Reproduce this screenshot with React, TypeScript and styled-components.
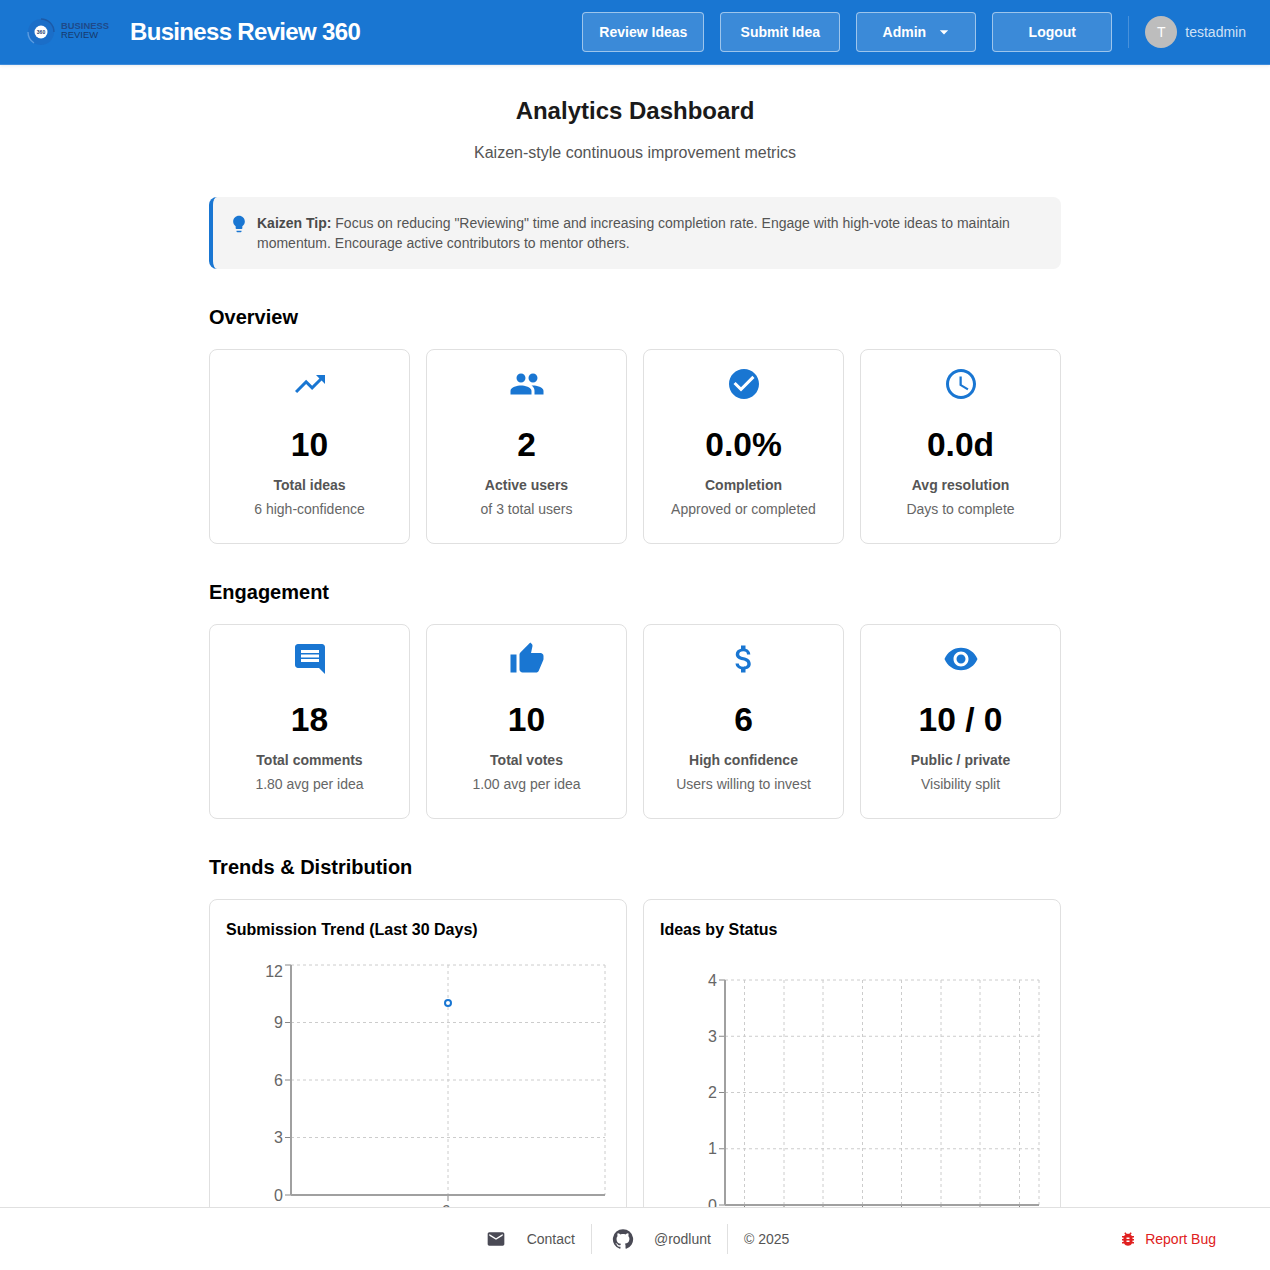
import { ReactNode } from "react";
import styled, { createGlobalStyle } from "styled-components";
import {
  MdArrowDropDown,
  MdAttachMoney,
  MdBugReport,
  MdCheckCircle,
  MdComment,
  MdEmail,
  MdLightbulb,
  MdOutlineAccessTime,
  MdPeople,
  MdThumbUp,
  MdTrendingUp,
  MdVisibility,
} from "react-icons/md";

const GlobalStyle = createGlobalStyle`
  html, body {
    margin: 0;
    height: 100%;
    overflow: hidden;
    background: #fff;
    font-family: "Liberation Sans", Arial, sans-serif;
  }
  * { box-sizing: border-box; }
`;

const Header = styled.header`
  height: 65px;
  padding: 0 24px;
  display: flex;
  align-items: center;
  background: #1976d2;
  border-bottom: 1px solid #3d8bdb;
  box-shadow: 0 1px 3px rgba(0, 0, 0, 0.08);
`;

const Brand = styled.div`
  display: flex;
  align-items: center;
  flex: 1;
`;

const BrandName = styled.div`
  margin-left: 20px;
  font-size: 24px;
  font-weight: 700;
  letter-spacing: -0.67px;
  color: #fff;
`;

const Nav = styled.nav`
  display: flex;
  align-items: center;
  gap: 16px;
`;

const NavButton = styled.button`
  min-width: 120px;
  height: 40px;
  padding: 0 16px;
  display: flex;
  align-items: center;
  justify-content: center;
  border: 1px solid rgba(255, 255, 255, 0.5);
  border-radius: 4px;
  background: rgba(255, 255, 255, 0.15);
  color: #fff;
  font: 700 14px "Liberation Sans", Arial, sans-serif;

  svg {
    margin: 0 -4px 0 8px;
  }
`;

const UserBox = styled.div`
  margin-left: 16px;
  padding-left: 16px;
  height: 32px;
  display: flex;
  align-items: center;
  gap: 8px;
  border-left: 1px solid rgba(255, 255, 255, 0.2);
`;

const Avatar = styled.div`
  width: 32px;
  height: 32px;
  border-radius: 50%;
  background: #bdbdbd;
  color: #fff;
  font-size: 14px;
  display: flex;
  align-items: center;
  justify-content: center;
`;

const UserName = styled.span`
  font-size: 14px;
  color: rgba(255, 255, 255, 0.8);
`;

const Main = styled.main`
  width: 852px;
  margin: 0 auto;
`;

const PageTitle = styled.h1`
  margin: 30px 0 0;
  font-size: 24px;
  line-height: 32px;
  font-weight: 700;
  text-align: center;
  color: #1a1a1a;
`;

const PageSubtitle = styled.p`
  margin: 14px 0 0;
  font-size: 16px;
  line-height: 24px;
  text-align: center;
  color: #555;
`;

const TipBox = styled.div`
  margin-top: 32px;
  padding: 16px;
  display: flex;
  gap: 8px;
  background: #f4f4f4;
  border-left: 4px solid #1976d2;
  border-radius: 8px;
  font-size: 14px;
  line-height: 20px;
  color: #555;

  svg {
    flex: none;
    margin-top: 1px;
    color: #1976d2;
  }

  strong {
    color: #4a4a4a;
  }
`;

const SectionTitle = styled.h2`
  margin: 34px 0 18px;
  font-size: 20px;
  line-height: 28px;
  font-weight: 700;
  color: #000;
`;

const StatGrid = styled.div`
  display: grid;
  grid-template-columns: repeat(4, 1fr);
  gap: 16px;
`;

const StatCard = styled.div`
  padding: 16px 8px 24px;
  display: flex;
  flex-direction: column;
  align-items: center;
  border: 1px solid #e0e0e0;
  border-radius: 8px;
  background: #fff;
  text-align: center;

  > svg {
    color: #1976d2;
  }
`;

const StatValue = styled.div`
  margin-top: 23px;
  font-size: 33.6px;
  line-height: 40px;
  font-weight: 700;
  color: #000;
`;

const StatLabel = styled.div`
  margin-top: 10px;
  font-size: 14px;
  line-height: 20px;
  font-weight: 700;
  color: #555;
`;

const StatNote = styled.div`
  margin-top: 4px;
  font-size: 14px;
  line-height: 20px;
  color: #666;
`;

const ChartGrid = styled.div`
  display: grid;
  grid-template-columns: repeat(2, 1fr);
  gap: 16px;
`;

const ChartCard = styled.div`
  padding: 18px 16px 24px;
  border: 1px solid #e0e0e0;
  border-radius: 8px;
  background: #fff;
`;

const ChartTitle = styled.h3`
  margin: 0 0 15px;
  font-size: 16px;
  line-height: 24px;
  font-weight: 700;
  color: #000;
`;

const ChartSvg = styled.svg`
  display: block;

  text {
    font: 16px "Liberation Sans", Arial, sans-serif;
    fill: #666;
  }
`;

const Footer = styled.footer`
  position: fixed;
  left: 0;
  right: 0;
  bottom: 0;
  height: 63px;
  padding: 0 54px;
  display: grid;
  grid-template-columns: 1fr auto 1fr;
  align-items: center;
  background: #fff;
  border-top: 1px solid #e0e0e0;
  font-size: 14px;
  color: #555;
`;

const FooterLinks = styled.div`
  grid-column: 2;
  margin-left: 4px;
  display: flex;
  align-items: center;
`;

const FooterItem = styled.div<{ $gap: number; $inset: number }>`
  height: 30px;
  display: flex;
  align-items: center;
  gap: ${(p) => p.$gap}px;
  padding: 0 16px 0 ${(p) => p.$inset}px;
  border-right: 1px solid #e0e0e0;

  svg {
    color: #4a4a55;
    flex: none;
  }

  &:last-child {
    padding-right: 0;
    border-right: 0;
  }
`;

const BugLink = styled.div`
  justify-self: end;
  display: flex;
  align-items: center;
  gap: 8px;
  color: #e02020;

  svg {
    flex: none;
  }
`;

interface Stat {
  icon: ReactNode;
  value: string;
  label: string;
  note: string;
}

const overview: Stat[] = [
  { icon: <MdTrendingUp size={36} />, value: "10", label: "Total ideas", note: "6 high-confidence" },
  { icon: <MdPeople size={36} />, value: "2", label: "Active users", note: "of 3 total users" },
  { icon: <MdCheckCircle size={36} />, value: "0.0%", label: "Completion", note: "Approved or completed" },
  { icon: <MdOutlineAccessTime size={36} />, value: "0.0d", label: "Avg resolution", note: "Days to complete" },
];

const engagement: Stat[] = [
  { icon: <MdComment size={36} />, value: "18", label: "Total comments", note: "1.80 avg per idea" },
  { icon: <MdThumbUp size={36} />, value: "10", label: "Total votes", note: "1.00 avg per idea" },
  { icon: <MdAttachMoney size={36} />, value: "6", label: "High confidence", note: "Users willing to invest" },
  { icon: <MdVisibility size={36} />, value: "10 / 0", label: "Public / private", note: "Visibility split" },
];

interface Tick {
  label: string;
  y: number;
  labelY?: number;
}

interface PlotProps {
  left: number;
  right: number;
  top: number;
  bottom: number;
  yTicks: Tick[];
  xGrid: number[];
  xTicks: number[];
  xLabels?: { x: number; label: string }[];
  dot?: { x: number; y: number };
}

const Plot = ({ left, right, top, bottom, yTicks, xGrid, xTicks, xLabels, dot }: PlotProps) => (
  <ChartSvg width={384} height={300} viewBox="0 0 384 300">
    <g stroke="#ccc" strokeDasharray="3 3" fill="none">
      {yTicks.map((t) => (
        <line key={t.y} x1={left} x2={right} y1={t.y} y2={t.y} />
      ))}
      {xGrid.map((x) => (
        <line key={x} x1={x} x2={x} y1={top} y2={bottom} />
      ))}
    </g>
    <g stroke="#888" fill="none">
      {yTicks.map((t) => (
        <line key={t.y} x1={left - 6} x2={left} y1={t.y} y2={t.y} />
      ))}
      {xTicks.map((x) => (
        <line key={x} x1={x} x2={x} y1={bottom} y2={bottom + 6} />
      ))}
    </g>
    <g stroke="#a0a0a0" strokeWidth={2} fill="none">
      <line x1={left} x2={left} y1={top} y2={bottom} />
      <line x1={left} x2={right} y1={bottom} y2={bottom} />
    </g>
    {yTicks.map((t) => (
      <text key={t.y} x={left - 8} y={(t.labelY ?? t.y) + 5.7} textAnchor="end">
        {t.label}
      </text>
    ))}
    {xLabels?.map((l) => (
      <text key={l.x} x={l.x} y={bottom + 22} textAnchor="middle">
        {l.label}
      </text>
    ))}
    {dot && <circle cx={dot.x} cy={dot.y} r={3} fill="#fff" stroke="#1976d2" strokeWidth={2} />}
  </ChartSvg>
);

const StatCards = ({ stats }: { stats: Stat[] }) => (
  <StatGrid>
    {stats.map((s) => (
      <StatCard key={s.label}>
        {s.icon}
        <StatValue>{s.value}</StatValue>
        <StatLabel>{s.label}</StatLabel>
        <StatNote>{s.note}</StatNote>
      </StatCard>
    ))}
  </StatGrid>
);

const Logo = () => (
  <svg width="86" height="40" viewBox="0 0 86 40">
    <circle cx="17" cy="20" r="13" fill="#1b6ec8" />
    <path d="M17 7a13 13 0 0 1 13 13" fill="none" stroke="#1c5aa8" strokeWidth="1.4" />
    <path d="M4 20a13 13 0 0 0 6 11" fill="none" stroke="#5a9be0" strokeWidth="1.4" />
    <circle cx="17" cy="20" r="6.5" fill="#fff" />
    <text x="17" y="22" textAnchor="middle" fontSize="5" fontWeight="700" fill="#1a3a6b" fontFamily="Liberation Sans">
      360
    </text>
    <text x="37" y="17" fontSize="9.4" fontWeight="700" fill="#1f4a8a" fontFamily="Liberation Sans">
      BUSINESS
    </text>
    <text x="37" y="26" fontSize="9.4" fill="#17396b" fontFamily="Liberation Sans">
      REVIEW
    </text>
  </svg>
);

const GithubIcon = () => (
  <svg width="22" height="22" viewBox="0 0 24 24" fill="currentColor">
    <path d="M12 1.27a11 11 0 0 0-3.48 21.46c.55.09.73-.28.73-.55v-1.84c-3.03.64-3.67-1.46-3.67-1.46-.55-1.29-1.28-1.65-1.28-1.65-.92-.65.1-.65.1-.65 1.1 0 1.73 1.1 1.73 1.1.92 1.65 2.57 1.2 3.21.92a2 2 0 0 1 .64-1.47c-2.47-.27-5.04-1.19-5.04-5.5 0-1.1.46-2.1 1.2-2.84a3.76 3.76 0 0 1 0-2.93s.91-.28 3.11 1.1c1.8-.49 3.7-.49 5.5 0 2.1-1.38 3.02-1.1 3.02-1.1a3.76 3.76 0 0 1 0 2.93c.83.74 1.2 1.74 1.2 2.94 0 4.21-2.57 5.13-5.04 5.4.45.37.82.92.82 2.02v3.03c0 .27.1.64.73.55A11 11 0 0 0 12 1.27" />
  </svg>
);

const App = () => (
  <>
    <GlobalStyle />
    <Header>
      <Brand>
        <Logo />
        <BrandName>Business Review 360</BrandName>
      </Brand>
      <Nav>
        <NavButton>Review Ideas</NavButton>
        <NavButton>Submit Idea</NavButton>
        <NavButton>
          Admin
          <MdArrowDropDown size={20} />
        </NavButton>
        <NavButton>Logout</NavButton>
      </Nav>
      <UserBox>
        <Avatar>T</Avatar>
        <UserName>testadmin</UserName>
      </UserBox>
    </Header>

    <Main>
      <PageTitle>Analytics Dashboard</PageTitle>
      <PageSubtitle>Kaizen-style continuous improvement metrics</PageSubtitle>

      <TipBox>
        <MdLightbulb size={20} />
        <div>
          <strong>Kaizen Tip:</strong> Focus on reducing "Reviewing" time and increasing completion rate. Engage with
          high-vote ideas to maintain momentum. Encourage active contributors to mentor others.
        </div>
      </TipBox>

      <SectionTitle>Overview</SectionTitle>
      <StatCards stats={overview} />

      <SectionTitle>Engagement</SectionTitle>
      <StatCards stats={engagement} />

      <SectionTitle>Trends &amp; Distribution</SectionTitle>
      <ChartGrid>
        <ChartCard>
          <ChartTitle>Submission Trend (Last 30 Days)</ChartTitle>
          <Plot
            left={65}
            right={379}
            top={8}
            bottom={238}
            yTicks={[
              { label: "12", y: 8, labelY: 14 },
              { label: "9", y: 65.5 },
              { label: "6", y: 123 },
              { label: "3", y: 180.5 },
              { label: "0", y: 238 },
            ]}
            xGrid={[222, 379]}
            xTicks={[222]}
            xLabels={[{ x: 220, label: "6" }]}
            dot={{ x: 222, y: 46 }}
          />
        </ChartCard>
        <ChartCard>
          <ChartTitle>Ideas by Status</ChartTitle>
          <Plot
            left={65}
            right={379}
            top={23}
            bottom={248}
            yTicks={[
              { label: "4", y: 23 },
              { label: "3", y: 79.25 },
              { label: "2", y: 135.5 },
              { label: "1", y: 191.75 },
              { label: "0", y: 248 },
            ]}
            xGrid={[84.5, 124, 163, 202.5, 241.5, 281, 320, 359.5, 379]}
            xTicks={[84.5, 124, 163, 202.5, 241.5, 281, 320, 359.5]}
          />
        </ChartCard>
      </ChartGrid>
    </Main>

    <Footer>
      <FooterLinks>
        <FooterItem $gap={21} $inset={1}>
          <MdEmail size={20} />
          Contact
        </FooterItem>
        <FooterItem $gap={20} $inset={20}>
          <GithubIcon />
          @rodlunt
        </FooterItem>
        <FooterItem $gap={0} $inset={16}>
          © 2025
        </FooterItem>
      </FooterLinks>
      <BugLink>
        <MdBugReport size={18} />
        Report Bug
      </BugLink>
    </Footer>
  </>
);

export default App;
